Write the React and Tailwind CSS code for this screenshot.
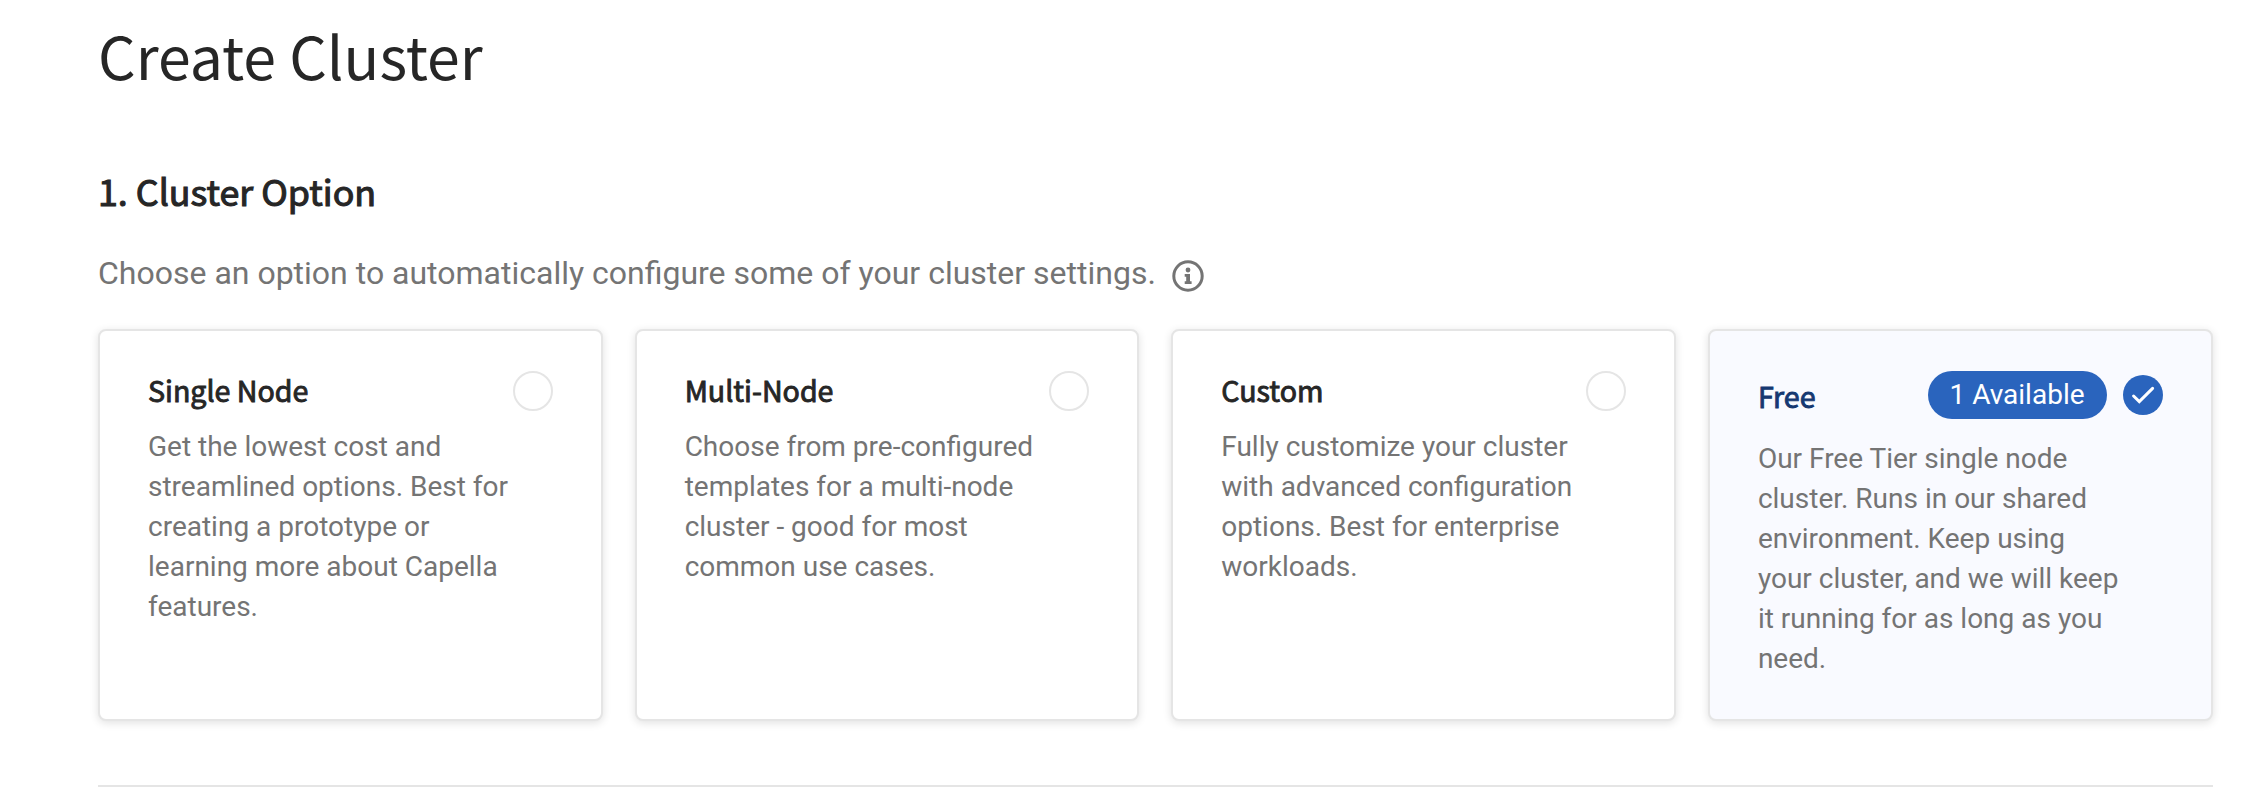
const cards = [
  {
    title: "Single Node",
    lines: ["Get the lowest cost and", "streamlined options. Best for", "creating a prototype or", "learning more about Capella", "features."],
  },
  {
    title: "Multi-Node",
    lines: ["Choose from pre-configured", "templates for a multi-node", "cluster - good for most", "common use cases."],
  },
  {
    title: "Custom",
    lines: ["Fully customize your cluster", "with advanced configuration", "options. Best for enterprise", "workloads."],
  },
  {
    title: "Free",
    badge: "1 Available",
    selected: true,
    lines: ["Our Free Tier single node", "cluster. Runs in our shared", "environment. Keep using", "your cluster, and we will keep", "it running for as long as you", "need."],
  },
];

function InfoIcon() {
  return (
    <svg className="mt-[3px] ml-4 size-8" viewBox="0 0 32 32" fill="none">
      <circle cx="16" cy="16" r="14.2" stroke="#747474" strokeWidth="3" />
      <circle cx="16" cy="10" r="2.4" fill="#747474" />
      <path d="M12.7 14H18V21.2H19.6V24H12.7V21.2H14.2V16.8H12.7Z" fill="#747474" />
    </svg>
  );
}

function CheckIcon() {
  return (
    <svg className="size-10" viewBox="0 0 40 40" fill="none">
      <circle cx="20" cy="20" r="20" fill="#2a64bd" />
      <path d="M10.6 21L16.3 26.6L29.6 13.4" stroke="#fff" strokeWidth="3" strokeLinecap="round" />
    </svg>
  );
}

function OptionCard({ title, lines, badge, selected }) {
  return (
    <div
      className={
        "flex h-[392px] flex-col rounded-lg border-2 border-[#e5e5e5] px-12 pt-10 shadow-[0_2px_8px_rgba(0,0,0,0.12)] " +
        (selected ? "bg-[#f9faff]" : "bg-white")
      }
    >
      <div className={"flex justify-between " + (selected ? "h-[68px]" : "h-14")}>
        <h3
          className={
            "font-['Noto_Sans_CJK_SC',sans-serif] text-[28.6px] leading-[38px] [-webkit-text-stroke-width:0.9px] " +
            (selected ? "pt-[6px] text-[#153871]" : "text-[#262626]")
          }
        >
          {title}
        </h3>
        {selected ? (
          <div className="flex h-12 items-center gap-4">
            <span className="flex h-12 w-[179px] items-center justify-center rounded-full bg-[#2a64bd] pb-px text-[28px] text-white">
              {badge}
            </span>
            <CheckIcon />
          </div>
        ) : (
          <span className="size-10 rounded-full border-2 border-[#e5e5e5]" />
        )}
      </div>
      <p className="text-[28px] leading-10 whitespace-nowrap text-[#747474]">
        {lines.map((line) => (
          <span key={line} className="block">{line}</span>
        ))}
      </p>
    </div>
  );
}

export default function App() {
  return (
    <main className="h-[792px] overflow-hidden bg-white pr-[51.5px] pl-[98px] font-[Roboto,sans-serif]">
      <h1 className="pt-[15px] font-['Noto_Sans_CJK_SC',sans-serif] text-[59px] leading-[80px] text-[#262626]">
        Create Cluster
      </h1>
      <h2 className="mt-[69px] font-['Noto_Sans_CJK_SC',sans-serif] text-[35.8px] leading-[52px] text-[#262626] [-webkit-text-stroke-width:1.1px]">
        1. Cluster Option
      </h2>
      <div className="mt-[31px] flex h-[82px] items-start pt-[10px]">
        <p className="text-[32px] leading-[32px] whitespace-nowrap text-[#747474]">
          Choose an option to automatically configure some of your cluster settings.
        </p>
        <InfoIcon />
      </div>
      <div className="grid grid-cols-4 gap-8">
        {cards.map((card) => (
          <OptionCard key={card.title} {...card} />
        ))}
      </div>
      <hr className="mt-16 border-t-2 border-[#e5e5e5]" />
    </main>
  );
}
